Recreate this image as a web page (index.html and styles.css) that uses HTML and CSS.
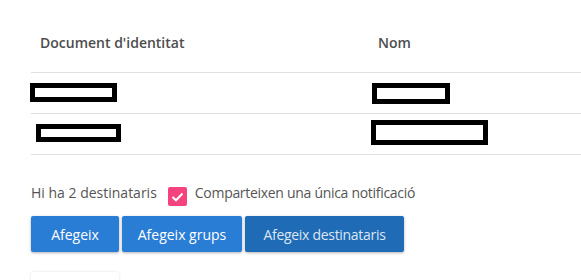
FILE: index.html
```html
<!DOCTYPE html>
<html lang="ca">
<head>
  <meta charset="UTF-8">
  <meta name="viewport" content="width=device-width, initial-scale=1.0">
  <title>Destinataris</title>
  <link rel="stylesheet" href="styles.css">
</head>
<body>

  <div class="recipients">
    <table class="recipients-table">
      <thead>
        <tr>
          <th class="col-doc">Document d'identitat</th>
          <th>Nom</th>
        </tr>
      </thead>
      <tbody>
        <tr>
          <td class="col-doc"><span class="redacted r1"></span></td>
          <td><span class="redacted r3"></span></td>
        </tr>
        <tr>
          <td class="col-doc"><span class="redacted r2"></span></td>
          <td><span class="redacted r4"></span></td>
        </tr>
      </tbody>
    </table>

    <div class="summary">
      <span class="count">Hi ha 2 destinataris</span>
      <label class="share">
        <span class="checkbox">
          <svg width="13" height="10" viewBox="0 0 13 10"><path d="M1.5 5 L5 8.3 L11.5 1.5" fill="none" stroke="#fff" stroke-width="2"/></svg>
        </span>
        Comparteixen una única notificació
      </label>
    </div>

    <div class="actions">
      <button class="btn btn-add">Afegeix</button>
      <button class="btn btn-groups">Afegeix grups</button>
      <button class="btn btn-dark btn-recipients">Afegeix destinataris</button>
    </div>

    <div class="card"></div>
  </div>

</body>
</html>
```

FILE: styles.css
```css
* {
  box-sizing: border-box;
  margin: 0;
  padding: 0;
}

body {
  font-family: 'Open Sans', 'Liberation Sans', sans-serif;
  font-size: 14px;
  color: #555;
  background: #fff;
  overflow: hidden;
}

.recipients {
  padding-left: 31px;
}

.recipients-table {
  width: 100%;
  border-collapse: collapse;
}

.recipients-table th {
  text-align: left;
  font-weight: 600;
  color: #4d4d4d;
  line-height: 20px;
  padding: 33px 9px 19px;
  border-bottom: 1px solid #e0e0e0;
}

.recipients-table td {
  height: 41px;
  padding: 0 9px;
  border-bottom: 1px solid #e0e0e0;
  vertical-align: middle;
}

.col-doc {
  width: 338px;
}

/* black redaction boxes */
.redacted {
  display: block;
  border: 5px solid #000;
  background: #fff;
}

.r1 { width: 87px; height: 19px; margin: 0 0 1px -10px; }
.r2 { width: 85px; height: 18px; margin: 0 0 3px -4px; }
.r3 { width: 78px; height: 21px; margin: 1px 0 0 -6px; }
.r4 { width: 117px; height: 25px; margin: 0 0 3px -7px; }

.summary {
  display: flex;
  align-items: flex-start;
  margin-top: 28px;
  line-height: 20px;
}

.share {
  display: flex;
  align-items: flex-start;
  margin-left: 11px;
  letter-spacing: -0.3px;
}

.checkbox {
  display: flex;
  align-items: center;
  justify-content: center;
  width: 19px;
  height: 19px;
  margin: 4px 8px 0 0;
  background: #f5447d;
  border-radius: 2px;
}

.actions {
  display: flex;
  gap: 3px;
  margin-top: 10px;
}

.btn {
  height: 36px;
  padding: 0;
  border: none;
  border-radius: 2px;
  background: #2a7dd4;
  color: #fff;
  font-family: inherit;
  font-size: 14px;
  text-align: center;
  box-shadow: 0 1px 3px rgba(0, 0, 0, 0.3);
  cursor: pointer;
}

.btn-add { width: 88px; }
.btn-groups { width: 120px; }
.btn-recipients { width: 159px; letter-spacing: -0.3px; }

.btn-dark {
  background: #1f6bb6;
  color: #dce6f2;
}

.card {
  width: 88px;
  height: 40px;
  margin-top: 20px;
  background: #fff;
  border-radius: 3px;
  box-shadow: 0 0 3px rgba(0, 0, 0, 0.12);
}
```
